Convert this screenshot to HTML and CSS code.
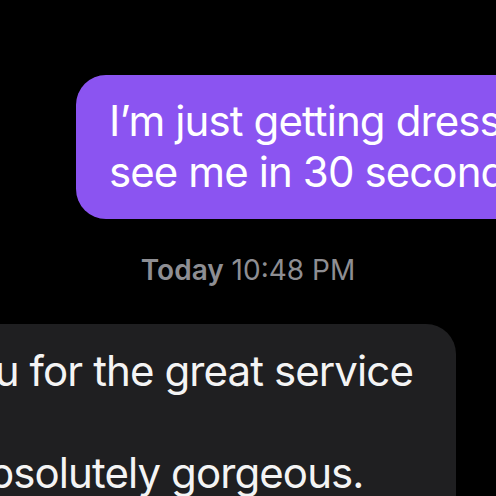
FILE: index.html
```html
<!DOCTYPE html>
<html lang="en">
<head>
	<meta charset="UTF-8">
	<title>Messages</title>
	<link rel="stylesheet" href="styles.css">
</head>
<body>
	<main class="thread">
		<div class="row out">
			<div class="bubble sent">
				<div class="line">I’m just getting dressed, you’ll</div>
				<div class="line">see me in 30 seconds</div>
			</div>
		</div>
		<p class="stamp"><b>Today</b> 10:48 PM</p>
		<div class="row in">
			<div class="bubble received">
				<div class="line">Thank you for the great service</div>
				<div class="line">&nbsp;</div>
				<div class="line">It looks absolutely gorgeous.</div>
			</div>
		</div>
	</main>
</body>
</html>
```

FILE: styles.css
```css
html, body {
	background: #000;
	margin: 0;
	height: 100%;
	overflow: hidden;
}
main.thread {
	display: flex;
	flex-direction: column;
	font-family: Inter, "Noto Sans", sans-serif;
	padding-top: 75px;
	width: 496px;
}
.row {
	display: flex;
}
.row.out {
	padding-left: 76px;
}
.row.in {
	justify-content: flex-end;
	padding-right: 40px;
	margin-top: 38px;
}
.bubble {
	border-radius: 30px;
	font-size: 42px;
	letter-spacing: -0.9px;
	line-height: 51px;
	white-space: nowrap;
	flex-shrink: 0;
}
.bubble.sent {
	background: #8b54f1;
	color: #fff;
	padding: 20px 40px 22px 33px;
	min-width: 600px;
}
.bubble.received {
	background: #1f1f21;
	color: #f4f4f4;
	padding: 21px 43px 40px 33px;
}
p.stamp {
	color: #8e8e93;
	font-size: 28px;
	line-height: 32px;
	margin: 35px 0 0;
	text-align: center;
}
p.stamp b {
	font-weight: 600;
}
```
